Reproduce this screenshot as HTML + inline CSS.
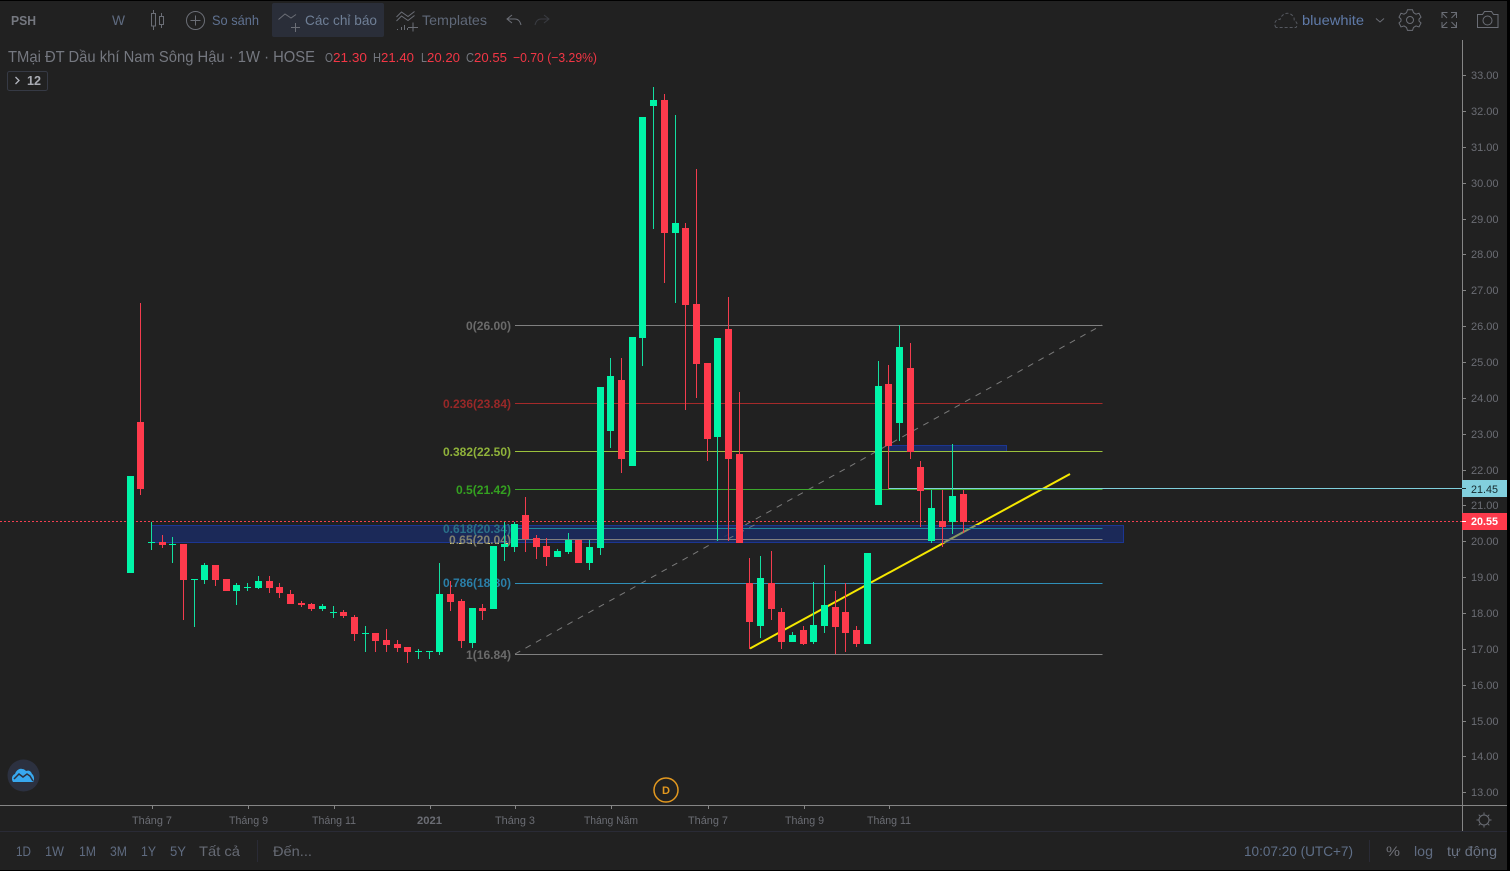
<!DOCTYPE html>
<html><head><meta charset="utf-8"><title>PSH</title>
<style>
html,body{margin:0;padding:0;background:#212121;width:1510px;height:871px;overflow:hidden}
svg{display:block;position:absolute;left:0;top:0}
text{font-family:"Liberation Sans","Noto Sans CJK JP",sans-serif}
.p{font-size:11px;fill:#6b6d74}
.t{font-size:11px;fill:#6b6d74}
.b{font-size:14px;fill:#5f6b80}
.f{font-size:12px;font-weight:bold}
.ic{fill:none;stroke:#6b6e76;stroke-width:1}
</style></head><body>
<svg width="1510" height="871" viewBox="0 0 1510 871" xmlns="http://www.w3.org/2000/svg">
<rect width="1510" height="871" fill="#212121"/>

<!-- toolbar -->
<rect x="272" y="3" width="112" height="34" rx="2" fill="#2a2e39"/>
<text x="11" y="25" font-size="13" font-weight="bold" fill="#757880" textLength="25" lengthAdjust="spacingAndGlyphs">PSH</text>
<text x="112" y="25" font-size="14" fill="#5f6b80" textLength="13" lengthAdjust="spacingAndGlyphs">W</text>
<path class="ic" d="M151.500 13.500h4v12.500h-4zM153.500 10v3.500M153.500 26v4M159.500 16.500h4v8h-4zM161.500 13v3.500M161.500 24.500V28"/>
<circle class="ic" cx="195.500" cy="20.500" r="9"/>
<path class="ic" d="M195.500 15.500v10M190.500 20.500h10"/>
<text x="212" y="25" font-size="14" fill="#5f7190" textLength="47" lengthAdjust="spacingAndGlyphs">So sánh</text>
<path class="ic" d="M278.500 19.500l6.500-5.500 6 4 5-3.500M291 27.500h9M295.500 23v9"/>
<text x="305" y="25" font-size="14" fill="#6f7f96" textLength="72" lengthAdjust="spacingAndGlyphs">Các chỉ báo</text>
<path class="ic" d="M396.500 17l5-5 6.500 4.500 6.500-5M396.500 21l5-5 6.500 4.500 6.500-5M397.500 30v-1M401.500 30v-3M404.500 30v-5M407.500 30v-2M408 27.500h10M413 22.500v9"/>
<text x="422" y="25" font-size="14" fill="#5f6878" textLength="65" lengthAdjust="spacingAndGlyphs">Templates</text>
<path class="ic" d="M512 15l-5 4 5 4M507 19h8c3 0 5 2 6 6"/>
<path fill="none" stroke="#3a3c42" d="M544 15l5 4-5 4M549 19h-8c-3 0-5 2-6 6"/>
<path fill="none" stroke="#55585f" stroke-dasharray="3 2" d="M1276 27.500c-3-4 0-9 4-8 1-4 5-7 9-6 4 1 6 5 5 7 3 1 4 4 2 7z"/>
<text x="1302" y="25" font-size="14" fill="#5f7aa8" textLength="62" lengthAdjust="spacingAndGlyphs">bluewhite</text>
<path class="ic" d="M1376 18.500l4 3.500 4-3.500"/>
<path class="ic" d="M1407.500 10.500h5l1 3 2.500 1.500 3-1 2 4-2 2v2l2 2-2 4-3-1-2.500 1.500-1 3h-5l-1-3-2.500-1.500-3 1-2-4 2-2v-2l-2-2 2-4 3 1 2.500-1.500z" transform="translate(0,-.5) scale(1 .98)"/>
<circle class="ic" cx="1410" cy="20" r="3.500"/>
<path class="ic" d="M1442 18v-5.500h5.500M1442 13l5 5M1456.500 18v-5.500H1451M1456.500 13l-5 5M1442 22v5.500h5.500M1442 27l5-5M1456.500 22v5.500H1451M1456.500 27l-5-5"/>
<path class="ic" d="M1477.500 14.500h5l2-3h7l2 3h4.500v13h-20.500z"/>
<circle class="ic" cx="1487.500" cy="20.500" r="4.500"/>

<!-- legend -->
<text x="8" y="62" font-size="16" fill="#757880" textLength="307" lengthAdjust="spacingAndGlyphs">TMại ĐT Dầu khí Nam Sông Hậu · 1W · HOSE</text>
<g font-size="13">
<text x="325" y="62" fill="#757880" textLength="8" lengthAdjust="spacingAndGlyphs">O</text>
<text x="333" y="62" fill="#f23645" textLength="34" lengthAdjust="spacingAndGlyphs">21.30</text>
<text x="373" y="62" fill="#757880" textLength="8" lengthAdjust="spacingAndGlyphs">H</text>
<text x="381" y="62" fill="#f23645" textLength="33" lengthAdjust="spacingAndGlyphs">21.40</text>
<text x="421" y="62" fill="#757880" textLength="6" lengthAdjust="spacingAndGlyphs">L</text>
<text x="427" y="62" fill="#f23645" textLength="33" lengthAdjust="spacingAndGlyphs">20.20</text>
<text x="466" y="62" fill="#757880" textLength="8" lengthAdjust="spacingAndGlyphs">C</text>
<text x="474" y="62" fill="#f23645" textLength="33" lengthAdjust="spacingAndGlyphs">20.55</text>
<text x="513" y="62" fill="#f23645" textLength="84" lengthAdjust="spacingAndGlyphs">−0.70 (−3.29%)</text>
</g>
<rect x="7.500" y="71.500" width="40" height="19" rx="2" fill="none" stroke="#363a45"/>
<path fill="none" stroke="#b2b5be" stroke-width="1.300" d="M15.500 77l3.500 3.500-3.500 3.500"/>
<text x="27" y="85" font-size="13" font-weight="bold" fill="#a8abb3" textLength="14" lengthAdjust="spacingAndGlyphs">12</text>

<!-- fib labels -->
<text class="f" x="466" y="330" fill="#6a6a6a" textLength="45" lengthAdjust="spacingAndGlyphs">0(26.00)</text>
<text class="f" x="443" y="408" fill="#982828" textLength="68" lengthAdjust="spacingAndGlyphs">0.236(23.84)</text>
<text class="f" x="443" y="456" fill="#8fb23a" textLength="68" lengthAdjust="spacingAndGlyphs">0.382(22.50)</text>
<text class="f" x="456" y="494" fill="#34a020" textLength="55" lengthAdjust="spacingAndGlyphs">0.5(21.42)</text>
<text class="f" x="443" y="587" fill="#2a7fa8" textLength="68" lengthAdjust="spacingAndGlyphs">0.786(18.80)</text>
<text class="f" x="466" y="659" fill="#6a6a6a" textLength="45" lengthAdjust="spacingAndGlyphs">1(16.84)</text>

<!-- trend/diagonal under zone -->
<path d="M750 648.500L1070 474" stroke="#f5e800" stroke-width="2" fill="none"/>
<path d="M515 654L1102 325" stroke="#7a7a7a" stroke-dasharray="6 6" fill="none"/>
<path d="M450 543.500h60" stroke="#e8d870" stroke-dasharray="4 5" fill="none"/>

<!-- zones -->
<rect x="151.500" y="525.500" width="972" height="17" fill="#1a2a60" fill-opacity=".88" stroke="#1c3692" stroke-width="1"/>
<rect x="889.500" y="445.500" width="117" height="6" fill="#1a2a60" stroke="#1c3692"/>
<path d="M944 542.500L975.500 525.500" stroke="#8c9a62" stroke-width="2" fill="none"/>
<path d="M728 539L760 522" stroke="#6c7480" stroke-dasharray="6 6" fill="none"/>
<text class="f" x="443" y="533" fill="#2a7088" textLength="68" lengthAdjust="spacingAndGlyphs">0.618(20.34)</text>
<text class="f" x="449" y="544" fill="#82826f" textLength="62" lengthAdjust="spacingAndGlyphs">0.65(20.04)</text>

<!-- fib lines -->
<g fill="none">
<path d="M515 325.500H1102.500M515 539.500H1102.500M515 654.500H1102.500" stroke="#808080"/>
<path d="M515 403.500H1102.500" stroke="#a52a2a"/>
<path d="M515 451.500H1102.500" stroke="#9cc23c"/>
<path d="M515 489.500H1102.500" stroke="#3ca82c"/>
<path d="M515 528.500H1102.500" stroke="#1f8a9c"/>
<path d="M515 583.500H1102.500" stroke="#2f8fb8"/>
<path d="M889 488.500H1462" stroke="#80cfdc"/>
<path d="M0 521.500H1462" stroke="#f23f50" stroke-dasharray="2 2"/>
</g>

<!-- candles: wicks -->
<path fill="none" stroke="#14dea0" d="M151.500 522V550M172.500 537V563M194.500 579V627M204.500 563V584M236.500 583V605M247.500 583V591M258.500 576V589M322.500 604V611M333.500 606V618M365.500 626V652M418.500 649V659M429.500 651V659M439.500 563V655M472.500 608V648M504.500 522V561M514.500 522V552M557.500 549V557M568.500 533V554M589.500 540V570M600.500 387V555M610.500 358V448M642.500 117V366M653.500 87V229M675.500 115V303M717.500 338V541M760.500 556V638M792.500 632V642M813.500 582V644M824.500 565V633M878.500 361V505M899.500 325V441M931.500 490V543M952.500 444V534"/>
<path fill="none" stroke="#f23c4e" d="M140.500 303V495M162.500 535V548M183.500 544V620M215.500 565V586M269.500 576V593M279.500 583V598M290.500 590V604M301.500 601V607M311.500 603V611M343.500 610V618M354.500 615V641M375.500 633V652M386.500 629V652M397.500 640V652M407.500 647V663M450.500 581V611M461.500 599V648M482.500 604V620M525.500 497V552M536.500 535V559M546.500 538V566M621.500 358V473M664.500 94V283M685.500 223V410M696.500 169V398M707.500 363V461M728.500 297V541M739.500 392V543M749.500 558V649M771.500 551V620M781.500 608V649M803.500 626V645M835.500 591V654M845.500 583V652M856.500 626V647M888.500 365V489M910.500 343V459M920.500 461V527M942.500 490V547M963.500 490V533"/>
<!-- candles: bodies -->
<path fill="#00f5a8" d="M127 476h7v97h-7zM148 542h7v1h-7zM169 544h7v1h-7zM191 579h7v1h-7zM201 565h7v15h-7zM233 585h7v6h-7zM244 587h7v1h-7zM255 581h7v7h-7zM319 606h7v3h-7zM330 612h7v1h-7zM362 633h7v1h-7zM415 651h7v1h-7zM426 651h7v1h-7zM436 594h7v58h-7zM469 608h7v35h-7zM490 546h7v63h-7zM501 544h7v3h-7zM511 524h7v23h-7zM554 551h7v6h-7zM565 540h7v12h-7zM586 547h7v16h-7zM597 387h7v161h-7zM607 376h7v55h-7zM629 337h7v129h-7zM639 117h7v221h-7zM650 100h7v6h-7zM672 223h7v10h-7zM714 338h7v99h-7zM757 578h7v48h-7zM789 635h7v7h-7zM810 625h7v17h-7zM821 605h7v21h-7zM864 553h7v91h-7zM875 386h7v119h-7zM896 347h7v76h-7zM928 508h7v33h-7zM949 496h7v26h-7z"/>
<path fill="#ff3a4c" d="M137 422h7v67h-7zM159 542h7v3h-7zM180 544h7v36h-7zM212 565h7v15h-7zM223 579h7v12h-7zM266 581h7v7h-7zM276 587h7v6h-7zM287 594h7v10h-7zM298 603h7v2h-7zM308 604h7v5h-7zM340 612h7v4h-7zM351 617h7v17h-7zM372 633h7v8h-7zM383 640h7v5h-7zM394 644h7v4h-7zM404 647h7v5h-7zM447 594h7v8h-7zM458 601h7v40h-7zM479 608h7v3h-7zM522 515h7v24h-7zM533 538h7v9h-7zM543 546h7v11h-7zM575 540h7v23h-7zM618 380h7v79h-7zM661 100h7v133h-7zM682 228h7v77h-7zM693 304h7v60h-7zM704 363h7v76h-7zM725 329h7v130h-7zM736 454h7v89h-7zM746 583h7v39h-7zM768 583h7v26h-7zM778 612h7v30h-7zM800 630h7v14h-7zM832 607h7v20h-7zM842 612h7v21h-7zM853 630h7v14h-7zM885 384h7v62h-7zM907 368h7v84h-7zM917 467h7v24h-7zM939 521h7v6h-7zM960 494h7v28h-7z"/>

<!-- logo + D -->
<circle cx="23.500" cy="775.500" r="16" fill="#2c3140"/>
<path fill="#38a8ef" d="M13 782c-2-3-1-7 2-8 1-3 4-6 7-5 2 0 3 1 4 2 3-1 5 0 6 3 2 1 3 6 1 8z"/>
<path fill="none" stroke="#2c3140" stroke-width="1.500" d="M14 779l5-5 4 3 4-3 3 2 3 5"/>
<circle cx="666" cy="790" r="12" fill="#212121" stroke="#e2981f" stroke-width="1.500"/>
<text x="662" y="794" font-size="11" font-weight="bold" fill="#e2981f" textLength="8" lengthAdjust="spacingAndGlyphs">D</text>

<!-- axes -->
<path fill="none" stroke="#858585" d="M1462.500 40V831M0 805.500H1507"/>
<path fill="none" stroke="#2a2b36" d="M0 831.500H1507M257.500 840V862M1369.500 840V862"/>
<path fill="none" stroke="#858585" d="M1462 75.500h4M1462 111.500h4M1462 147.500h4M1462 183.500h4M1462 219.500h4M1462 254.500h4M1462 290.500h4M1462 326.500h4M1462 362.500h4M1462 398.500h4M1462 434.500h4M1462 470.500h4M1462 505.500h4M1462 541.500h4M1462 577.500h4M1462 613.500h4M1462 649.500h4M1462 685.500h4M1462 721.500h4M1462 756.500h4M1462 792.500h4M152.500 806v3M248.500 806v3M334.500 806v3M430.500 806v3M515.500 806v3M611.500 806v3M708.500 806v3M804.500 806v3M889.500 806v3"/>
<g>
<text class="p" x="1471" y="79">33.00</text>
<text class="p" x="1471" y="115">32.00</text>
<text class="p" x="1471" y="151">31.00</text>
<text class="p" x="1471" y="187">30.00</text>
<text class="p" x="1471" y="223">29.00</text>
<text class="p" x="1471" y="258">28.00</text>
<text class="p" x="1471" y="294">27.00</text>
<text class="p" x="1471" y="330">26.00</text>
<text class="p" x="1471" y="366">25.00</text>
<text class="p" x="1471" y="402">24.00</text>
<text class="p" x="1471" y="438">23.00</text>
<text class="p" x="1471" y="474">22.00</text>
<text class="p" x="1471" y="509">21.00</text>
<text class="p" x="1471" y="545">20.00</text>
<text class="p" x="1471" y="581">19.00</text>
<text class="p" x="1471" y="617">18.00</text>
<text class="p" x="1471" y="653">17.00</text>
<text class="p" x="1471" y="689">16.00</text>
<text class="p" x="1471" y="725">15.00</text>
<text class="p" x="1471" y="760">14.00</text>
<text class="p" x="1471" y="796">13.00</text>
</g>
<rect x="1462" y="480" width="45" height="17" fill="#82cfdd"/>
<path d="M1462 488.500h4" stroke="#1a2a2a"/>
<text x="1471" y="493" font-size="11" fill="#14282c" textLength="27" lengthAdjust="spacingAndGlyphs">21.45</text>
<rect x="1462" y="513" width="45" height="17" fill="#ff3a4c"/>
<path d="M1462 521.500h4" stroke="#ffffff"/>
<text x="1471" y="525" font-size="11" font-weight="bold" fill="#ffffff" textLength="27" lengthAdjust="spacingAndGlyphs">20.55</text>

<!-- time labels -->
<text class="t" x="132" y="824" textLength="40" lengthAdjust="spacingAndGlyphs">Tháng 7</text>
<text class="t" x="229" y="824" textLength="39" lengthAdjust="spacingAndGlyphs">Tháng 9</text>
<text class="t" x="312" y="824" textLength="44" lengthAdjust="spacingAndGlyphs">Tháng 11</text>
<text class="t" x="417" y="824" font-weight="bold" textLength="25" lengthAdjust="spacingAndGlyphs">2021</text>
<text class="t" x="495" y="824" textLength="40" lengthAdjust="spacingAndGlyphs">Tháng 3</text>
<text class="t" x="584" y="824" textLength="54" lengthAdjust="spacingAndGlyphs">Tháng Năm</text>
<text class="t" x="688" y="824" textLength="40" lengthAdjust="spacingAndGlyphs">Tháng 7</text>
<text class="t" x="785" y="824" textLength="39" lengthAdjust="spacingAndGlyphs">Tháng 9</text>
<text class="t" x="867" y="824" textLength="44" lengthAdjust="spacingAndGlyphs">Tháng 11</text>

<!-- sun -->
<circle class="ic" cx="1484" cy="820" r="5"/>
<path class="ic" d="M1484 812.500v2M1484 825.500v2M1476.500 820h2M1489.500 820h2M1478.700 814.700l1.500 1.500M1487.800 823.800l1.500 1.500M1489.300 814.700l-1.500 1.500M1480.200 823.800l-1.500 1.500"/>

<!-- bottom bar -->
<text class="b" x="16" y="856" textLength="15" lengthAdjust="spacingAndGlyphs">1D</text>
<text class="b" x="45" y="856" textLength="19" lengthAdjust="spacingAndGlyphs">1W</text>
<text class="b" x="79" y="856" textLength="17" lengthAdjust="spacingAndGlyphs">1M</text>
<text class="b" x="110" y="856" textLength="17" lengthAdjust="spacingAndGlyphs">3M</text>
<text class="b" x="141" y="856" textLength="15" lengthAdjust="spacingAndGlyphs">1Y</text>
<text class="b" x="170" y="856" textLength="16" lengthAdjust="spacingAndGlyphs">5Y</text>
<text class="b" x="199" y="856" style="fill:#666a74" textLength="41" lengthAdjust="spacingAndGlyphs">Tất cả</text>
<text class="b" x="273" y="856" style="fill:#666a74" textLength="39" lengthAdjust="spacingAndGlyphs">Đến...</text>
<text class="b" x="1244" y="856" style="fill:#5f6f88" textLength="109" lengthAdjust="spacingAndGlyphs">10:07:20 (UTC+7)</text>
<text class="b" x="1386" y="856" style="fill:#6f7178" textLength="14" lengthAdjust="spacingAndGlyphs">%</text>
<text class="b" x="1414" y="856" style="fill:#5f6b80" textLength="19" lengthAdjust="spacingAndGlyphs">log</text>
<text class="b" x="1447" y="856" style="fill:#6a7384" textLength="50" lengthAdjust="spacingAndGlyphs">tự động</text>

<!-- frame -->
<rect x="0" y="0" width="1510" height="1" fill="#000"/>
<rect x="0" y="870" width="1510" height="1" fill="#000"/>
<rect x="1507" y="0" width="3" height="871" fill="#000"/>
</svg>
</body></html>
